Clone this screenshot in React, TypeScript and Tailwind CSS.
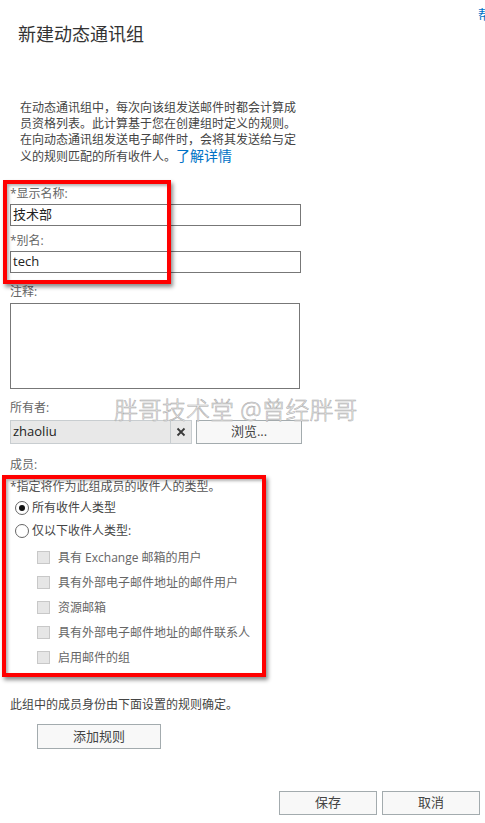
import React from "react";

const font = "font-['Open_Sans','Noto_Sans_CJK_SC',sans-serif]";

function Checkbox({ label }: { label: string }) {
  return (
    <div className="flex h-[25px] items-center pl-[27px]">
      <span className="h-[13px] w-[13px] border border-[#c8c8c8] bg-[#e6e6e6]" />
      <span className="ml-[8px] text-[12px] leading-4 text-[#666]">{label}</span>
    </div>
  );
}

function Radio({ label, checked }: { label: string; checked?: boolean }) {
  return (
    <div className="flex h-[23px] items-center pl-[5px]">
      <span className="flex h-[14px] w-[14px] items-center justify-center rounded-full border border-[#666] bg-white">
        {checked && <span className="h-[6px] w-[6px] rounded-full bg-[#111]" />}
      </span>
      <span className="ml-[3px] text-[12px] leading-4 text-[#444]">{label}</span>
    </div>
  );
}

export default function App() {
  return (
    <div className={`relative h-[823px] w-[485px] overflow-hidden bg-white ${font}`}>
      <div className="absolute left-[478px] top-[6px] text-[13px] leading-4 text-[#0072c6]">帮</div>

      <div className="ml-[18px] pt-[22px] text-[18px] leading-6 text-[#333]">新建动态通讯组</div>

      <div className="ml-[20px] mt-[54px] whitespace-nowrap text-[12px] leading-4 text-[#444]">
        在动态通讯组中，每次向该组发送邮件时都会计算成
        <br />
        员资格列表。此计算基于您在创建组时定义的规则。
        <br />
        在向动态通讯组发送电子邮件时，会将其发送给与定
        <br />
        义的规则匹配的所有收件人。
        <span className="text-[14px] leading-4 text-[#0072c6]">了解详情</span>
      </div>

      <div className="pl-[10px]">
        <div className="mt-[21px] text-[12px] leading-4 text-[#666]">*显示名称:</div>
        <div className="mt-[2px] flex h-[22px] w-[291px] items-center border border-[#777] pl-[2px] text-[13px] text-[#222]">
          技术部
        </div>
        <div className="mt-[7px] text-[12px] leading-4 text-[#666]">*别名:</div>
        <div className="mt-[2px] flex h-[22px] w-[291px] items-center border border-[#777] pl-[2px] text-[13px] text-[#222]">
          tech
        </div>
        <div className="mt-[11px] text-[12px] leading-4 text-[#666]">注释:</div>
        <div className="mt-[3px] h-[86px] w-[290px] border border-[#777]" />
        <div className="mt-[11px] text-[12px] leading-4 text-[#666]">所有者:</div>
        <div className="mt-[4px] flex h-[24px] items-stretch">
          <div className="flex w-[182px] border border-[#c8cdd0] bg-[#e8e8e8]">
            <div className="flex flex-1 items-center pl-[2px] text-[13px] text-[#222]">zhaoliu</div>
            <div className="flex w-[21px] items-center justify-center border-l border-[#c8cdd0]">
              <svg width="10" height="10" viewBox="0 0 10 10">
                <path d="M1.5 1.5L8.5 8.5M8.5 1.5L1.5 8.5" stroke="#3a3a3a" strokeWidth="1.8" />
              </svg>
            </div>
          </div>
          <div className="ml-[4px] flex w-[106px] items-center justify-center border border-[#a3abae] bg-[#f8f8f8] text-[13px] text-[#444]">
            浏览...
          </div>
        </div>
        <div className="mt-[13px] text-[12px] leading-4 text-[#666]">成员:</div>
        <div className="mt-[6px] text-[12px] leading-4 text-[#555]">*指定将作为此组成员的收件人的类型。</div>
        <div className="mt-[1px]">
          <Radio label="所有收件人类型" checked />
          <Radio label="仅以下收件人类型:" />
        </div>
        <div className="mt-[3px]">
          <Checkbox label="具有 Exchange 邮箱的用户" />
          <Checkbox label="具有外部电子邮件地址的邮件用户" />
          <Checkbox label="资源邮箱" />
          <Checkbox label="具有外部电子邮件地址的邮件联系人" />
          <Checkbox label="启用邮件的组" />
        </div>
        <div className="mt-[27px] text-[12px] leading-4 text-[#444]">此组中的成员身份由下面设置的规则确定。</div>
        <div className="ml-[27px] mt-[11px] flex h-[25px] w-[124px] items-center justify-center border border-[#a3abae] bg-[#f8f8f8] text-[13px] text-[#444]">
          添加规则
        </div>
      </div>

      <div className="mt-[42px] flex justify-end gap-[5px] pr-[5px]">
        <div className="flex h-[24px] w-[98px] items-center justify-center border border-[#a3abae] bg-[#f8f8f8] text-[13px] text-[#444]">
          保存
        </div>
        <div className="flex h-[24px] w-[98px] items-center justify-center border border-[#a3abae] bg-[#f8f8f8] text-[13px] text-[#444]">
          取消
        </div>
      </div>

      {/* annotation boxes */}
      <div className="pointer-events-none absolute left-[3px] top-[180px] h-[104px] w-[168px] border-4 border-[#ff0000] shadow-[2px_3px_4px_rgba(0,0,0,0.45),inset_2px_2px_3px_rgba(0,0,0,0.3)]" />
      <div className="pointer-events-none absolute left-[2px] top-[475px] h-[202px] w-[264px] border-4 border-[#ff0000] shadow-[2px_3px_4px_rgba(0,0,0,0.45),inset_2px_2px_3px_rgba(0,0,0,0.3)]" />

      {/* watermark */}
      <div className="pointer-events-none absolute left-[114px] top-[396px] whitespace-nowrap text-[24px] font-light leading-7 text-[#f2f2f2] [-webkit-text-stroke:0.5px_#a8a8a8]">
        胖哥技术堂 @曾经胖哥
      </div>
    </div>
  );
}
